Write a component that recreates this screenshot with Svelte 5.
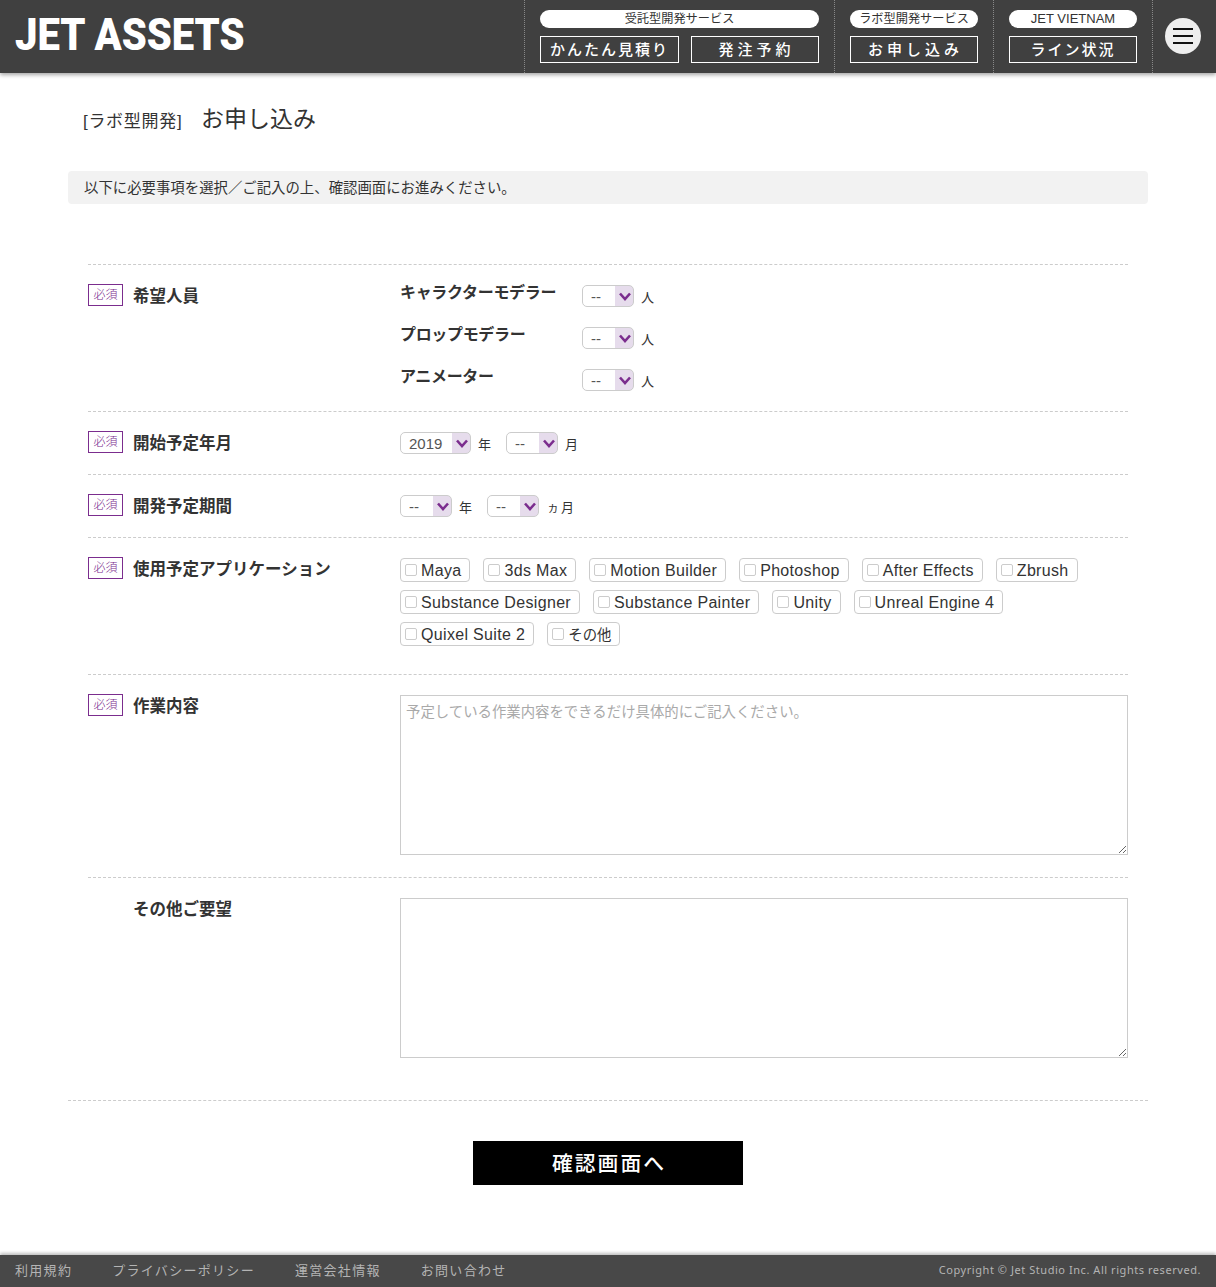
<script>
	const apps = [
		'Maya', '3ds Max', 'Motion Builder', 'Photoshop', 'After Effects', 'Zbrush',
		'Substance Designer', 'Substance Painter', 'Unity', 'Unreal Engine 4',
		'Quixel Suite 2', 'その他'
	];
	const staff = ['キャラクターモデラー', 'プロップモデラー', 'アニメーター'];
</script>

{#snippet pick(value, wide)}
	<span class="sel" class:wide>
		<select aria-label="選択"><option>{value}</option></select>
		<svg class="arrow" viewBox="0 0 18 20" aria-hidden="true">
			<path d="M4 7.5l5 5.5 5-5.5" fill="none" stroke="#7b2d8e" stroke-width="2.6" />
		</svg>
	</span>
{/snippet}

{#snippet must()}
	<span class="must">必須</span>
{/snippet}

<header>
	<div class="logo">JET ASSETS</div>
	<nav>
		<div class="group first">
			<div class="pill">受託型開発サービス</div>
			<div class="btns">
				<a href="#a" class="b1">かんたん見積り</a>
				<a href="#a" class="b2">発注予約</a>
			</div>
		</div>
		<div class="group">
			<div class="pill">ラボ型開発サービス</div>
			<div class="btns"><a href="#a" class="b3">お申し込み</a></div>
		</div>
		<div class="group">
			<div class="pill latin">JET VIETNAM</div>
			<div class="btns"><a href="#a" class="b4">ライン状況</a></div>
		</div>
		<div class="menu-cell">
			<button class="menu" aria-label="メニュー"><i></i><i></i><i></i></button>
		</div>
	</nav>
</header>

<main>
	<h1><small>[ラボ型開発]</small><span>お申し込み</span></h1>
	<p class="notice">以下に必要事項を選択／ご記入の上、確認画面にお進みください。</p>

	<form>
		<div class="row r1">
			<div class="head">{@render must()}<label for="s0">希望人員</label></div>
			<div class="staff">
				{#each staff as s}
					<div class="staff-row">
						<b>{s}</b>
						{@render pick('--')}
						<em>人</em>
					</div>
				{/each}
			</div>
		</div>

		<div class="row r2">
			<div class="head">{@render must()}<label for="s1">開始予定年月</label></div>
			<div class="inline">
				{@render pick('2019', true)}<em>年</em>
				{@render pick('--')}<em>月</em>
			</div>
		</div>

		<div class="row r2">
			<div class="head">{@render must()}<label for="s2">開発予定期間</label></div>
			<div class="inline">
				{@render pick('--')}<em>年</em>
				{@render pick('--')}<em class="months"><span>ヵ</span>月</em>
			</div>
		</div>

		<div class="row r4">
			<div class="head">{@render must()}<label for="s3">使用予定アプリケーション</label></div>
			<div class="chips">
				{#each apps as app}
					<label class="chip" class:jp={app === 'その他'}><input type="checkbox" />{app}</label>
				{/each}
			</div>
		</div>

		<div class="row r5">
			<div class="head">{@render must()}<label for="work">作業内容</label></div>
			<textarea id="work" placeholder="予定している作業内容をできるだけ具体的にご記入ください。"></textarea>
		</div>

		<div class="row r6">
			<div class="head nomust"><label for="other">その他ご要望</label></div>
			<textarea id="other"></textarea>
		</div>

		<div class="submit">
			<button type="button">確認画面へ</button>
		</div>
	</form>
</main>

<footer>
	<ul>
		<li>利用規約</li>
		<li>プライバシーポリシー</li>
		<li>運営会社情報</li>
		<li>お問い合わせ</li>
	</ul>
	<small>Copyright © Jet Studio Inc. All rights reserved.</small>
</footer>

<style>
	:global(body) {
		background: #fff;
		color: #333;
		font-family: 'Liberation Sans', 'Noto Sans CJK JP', sans-serif;
	}

	header {
		position: relative;
		display: flex;
		justify-content: space-between;
		height: 73px;
		background: #404040;
		box-shadow: 0 2px 4px rgba(0, 0, 0, 0.35);
	}

	.logo {
		margin-left: 15px;
		color: #fff;
		font-family: Roboto, sans-serif;
		font-size: 45px;
		font-weight: 900;
		line-height: 69px;
		transform-origin: left;
		transform: scaleX(0.89);
		white-space: nowrap;
	}

	nav {
		display: flex;
	}

	.group {
		padding: 10px 15px 0;
		border-left: 1px dotted #888;
	}

	.pill {
		height: 18px;
		border-radius: 9px;
		background: #fff;
		color: #333;
		font-size: 12.2px;
		line-height: 18px;
		text-align: center;
	}

	.pill.latin {
		font-size: 13px;
	}

	.btns {
		display: flex;
		gap: 12px;
		margin-top: 8px;
	}

	.btns a {
		display: block;
		box-sizing: border-box;
		height: 27px;
		border: 1px solid #fff;
		color: #fff;
		font-size: 15px;
		font-weight: 500;
		line-height: 26px;
		letter-spacing: 2px;
		text-align: center;
		text-decoration: none;
	}

	.b1 {
		width: 139px;
	}

	.b2,
	.b3,
	.b4 {
		width: 128px;
	}

	.btns .b2,
	.btns .b3 {
		letter-spacing: 4px;
		text-indent: 3px;
	}

	.menu-cell {
		display: flex;
		align-items: flex-start;
		width: 64px;
		padding: 18px 0 0 12px;
		box-sizing: border-box;
		border-left: 1px dotted #888;
	}

	.menu {
		display: flex;
		flex-direction: column;
		align-items: center;
		justify-content: center;
		gap: 5px;
		width: 36px;
		height: 36px;
		padding: 0;
		border: none;
		border-radius: 50%;
		background: #eee;
	}

	.menu i {
		width: 20px;
		height: 2px;
		background: #111;
	}

	main {
		width: 1080px;
		margin: 0 auto;
	}

	h1 {
		display: flex;
		align-items: baseline;
		margin: 0;
		padding: 30px 0 0 15px;
		font-weight: 400;
		font-size: 23px;
		line-height: 33px;
	}

	h1 small {
		width: 118px;
		font-size: 17px;
		letter-spacing: 0.7px;
	}

	.notice {
		height: 33px;
		margin: 33px 0 60px;
		padding-left: 16px;
		border-radius: 4px;
		background: #f2f2f2;
		font-size: 14.4px;
		line-height: 35px;
	}

	form {
		padding: 0 20px;
	}

	.row {
		display: grid;
		grid-template-columns: 312px 728px;
		align-items: start;
		border-top: 1px dashed #ccc;
		padding-top: 19px;
	}

	.r1 {
		height: 127px;
	}

	.r2 {
		height: 43px;
	}

	.r4 {
		height: 117px;
	}

	.r5 {
		height: 183px;
	}

	.r5 textarea,
	.r6 textarea {
		margin-top: 1px;
	}

	.head {
		display: flex;
		align-items: center;
		gap: 10px;
		height: 22px;
	}

	.nomust {
		padding-left: 45px;
	}

	.head label {
		color: #333;
		font-size: 16.5px;
		font-weight: 700;
	}

	.must {
		box-sizing: border-box;
		width: 35px;
		height: 22px;
		border: 1px solid #7b2d8e;
		color: #7b2d8e;
		font-size: 12px;
		font-weight: 300;
		line-height: 20px;
		text-align: center;
	}

	.staff {
		display: flex;
		flex-direction: column;
		gap: 17px;
		padding-top: 1px;
	}

	.staff-row {
		display: flex;
		align-items: flex-start;
	}

	.staff-row b {
		width: 182px;
		font-size: 16px;
		line-height: 15px;
		letter-spacing: -0.33px;
	}

	em {
		font-style: normal;
		font-size: 13px;
		line-height: 24px;
		margin-left: 7px;
		padding-top: 1px;
	}

	.months {
		margin-left: 8px;
	}

	.months span {
		margin-right: 2px;
		font-size: 12px;
	}

	.inline {
		display: flex;
		align-items: flex-start;
		padding-top: 1px;
	}

	.inline em + .sel {
		margin-left: 15px;
	}

	.sel {
		position: relative;
		display: block;
		width: 52px;
		height: 22px;
	}

	.sel.wide {
		width: 71px;
	}

	select {
		appearance: none;
		display: block;
		box-sizing: border-box;
		width: 100%;
		height: 100%;
		padding: 0 0 0 8px;
		border: 1px solid #ccc;
		border-radius: 5px;
		background: linear-gradient(to left, #e6dcec 18px, #fff 18px);
		color: #555;
		font: inherit;
		font-size: 15px;
	}

	.arrow {
		position: absolute;
		top: 1px;
		right: 0;
		width: 18px;
		height: 20px;
		pointer-events: none;
	}

	.chips {
		display: flex;
		flex-wrap: wrap;
		gap: 8px 13px;
		margin-top: 1px;
	}

	.chip {
		display: flex;
		align-items: center;
		box-sizing: border-box;
		height: 24px;
		padding: 1px 8px 0 4px;
		border: 1px solid #ccc;
		border-radius: 4px;
		color: #333;
		font-size: 16px;
		letter-spacing: 0.33px;
		white-space: nowrap;
	}

	.chip.jp {
		padding-top: 0;
		padding-bottom: 2px;
		font-size: 14.4px;
		letter-spacing: 0;
	}

	.chip input {
		appearance: none;
		box-sizing: border-box;
		width: 12px;
		height: 12px;
		margin: -1px 4px 0 0;
		border: 1px solid #ccc;
		border-radius: 2px;
		background: #fff;
	}

	.chip.jp input {
		margin-top: 2px;
	}

	textarea {
		display: block;
		box-sizing: border-box;
		width: 728px;
		height: 160px;
		padding: 6px 5px;
		border: 1px solid #ccc;
		border-radius: 0;
		color: #333;
		font: inherit;
		font-size: 14.4px;
		line-height: 20px;
	}

	textarea::placeholder {
		color: #a9a9a9;
	}

	.submit {
		display: flex;
		justify-content: center;
		margin: 42px -20px 0;
		padding-top: 40px;
		border-top: 1px dashed #ccc;
	}

	.submit button {
		width: 270px;
		height: 44px;
		padding: 0 0 2px 2px;
		border: none;
		background: #000;
		color: #fff;
		font: inherit;
		font-size: 20.8px;
		font-weight: 500;
		letter-spacing: 2px;
	}

	footer {
		display: flex;
		justify-content: space-between;
		align-items: center;
		box-sizing: border-box;
		height: 32px;
		margin-top: 70px;
		padding: 0 15px 3px;
		background: #484848;
		box-shadow: 0 -2px 3px rgba(0, 0, 0, 0.25);
		color: #b4b4b4;
	}

	footer ul {
		display: flex;
		gap: 40px;
		margin: 0;
		padding: 0;
		list-style: none;
		font-size: 13px;
		letter-spacing: 1.3px;
	}

	footer small {
		font-family: 'Noto Sans', sans-serif;
		font-size: 11px;
		letter-spacing: 0.55px;
	}
</style>
